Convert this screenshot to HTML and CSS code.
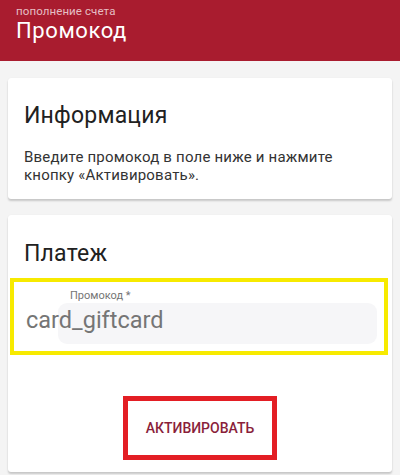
FILE: index.html
```html
<!DOCTYPE html>
<html lang="ru">
<head>
<meta charset="utf-8">
<title>Промокод</title>
<link rel="stylesheet" href="styles.css">
</head>
<body>
<header class="topbar">
  <div class="topbar-sub">пополнение счета</div>
  <div class="topbar-title">Промокод</div>
</header>
<main class="content">
  <section class="card card-info">
    <h2 class="card-title">Информация</h2>
    <p class="card-text">Введите промокод в поле ниже и нажмите кнопку «Активировать».</p>
  </section>
  <section class="card card-pay">
    <h2 class="card-title card-title-pay">Платеж</h2>
    <div class="highlight-yellow">
      <div class="field-row">
        <span class="field-icon">card_giftcard</span>
        <div class="field-group">
          <label class="field-label">Промокод *</label>
          <div class="field-box"></div>
        </div>
      </div>
    </div>
    <div class="actions">
      <div class="highlight-red">
        <button class="btn-activate">Активировать</button>
      </div>
    </div>
  </section>
</main>
</body>
</html>
```
FILE: styles.css
```css
html, body {
  margin: 0;
  padding: 0;
}
body {
  background: #f4f4f4;
  font-family: Roboto, "Noto Sans", sans-serif;
  width: 400px;
  height: 475px;
  overflow: hidden;
}
.topbar {
  background: #a91c2f;
  height: 61px;
  box-sizing: border-box;
  padding: 5px 16px 0;
  color: #fff;
}
.topbar-sub {
  font-size: 11.5px;
  line-height: 13px;
  letter-spacing: 0.1px;
  color: rgba(255, 255, 255, 0.72);
}
.topbar-title {
  font-size: 22px;
  line-height: 26px;
  letter-spacing: 0.6px;
}
.content {
  padding: 17px 8px 0;
  display: flex;
  flex-direction: column;
  gap: 16px;
}
.card {
  background: #fff;
  border-radius: 3px;
  box-shadow: 0 2px 2px rgba(0, 0, 0, 0.18), 0 0 1px rgba(0, 0, 0, 0.08);
}
.card-info {
  height: 121px;
  box-sizing: border-box;
  padding: 24px 16px 0;
}
.card-title {
  margin: 0;
  font-size: 23px;
  line-height: 28px;
  font-weight: 400;
  letter-spacing: 0.2px;
  color: #212121;
}
.card-text {
  margin: 18px 0 0;
  font-size: 15px;
  line-height: 18px;
  letter-spacing: 0.2px;
  color: #333;
}
.card-pay {
  height: 257px;
  box-sizing: border-box;
  padding: 25px 0 0;
}
.card-title-pay {
  padding: 0 16px;
}
.highlight-yellow {
  margin: 10px 4px 0 2px;
  border: 4px solid #f7ea00;
  padding: 7px 7px 7px 12px;
}
.field-row {
  display: flex;
  align-items: flex-end;
}
.field-icon {
  position: relative;
  z-index: 1;
  flex: 0 0 32px;
  width: 32px;
  height: 41px;
  line-height: 34px;
  font-size: 23.5px;
  white-space: nowrap;
  color: #757575;
}
.field-group {
  flex: 1;
  display: flex;
  flex-direction: column;
}
.field-label {
  font-size: 11px;
  line-height: 14px;
  padding-left: 12px;
  color: #757575;
}
.field-box {
  height: 41px;
  background: #f6f6f8;
  border-radius: 9px;
}
.actions {
  display: flex;
  justify-content: center;
  margin-top: 41px;
}
.highlight-red {
  width: 154px;
  height: 64px;
  box-sizing: border-box;
  border: 5px solid #e31e24;
  display: flex;
  align-items: center;
  justify-content: center;
}
.btn-activate {
  background: none;
  border: 0;
  padding: 0;
  font-family: Roboto, "Noto Sans", sans-serif;
  font-size: 14px;
  font-weight: 500;
  letter-spacing: 0;
  text-transform: uppercase;
  color: #8a1f3b;
}
```
